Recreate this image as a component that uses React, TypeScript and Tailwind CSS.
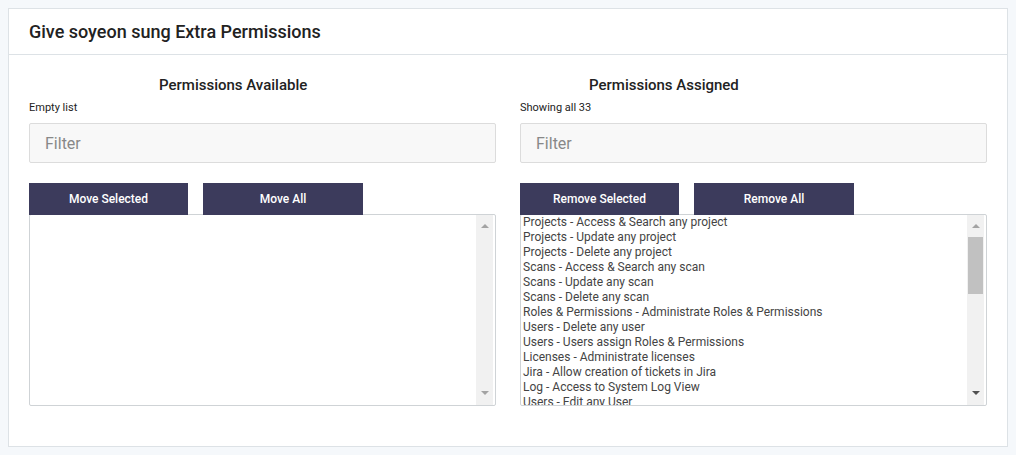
const assigned = [
  'Projects - Access & Search any project',
  'Projects - Update any project',
  'Projects - Delete any project',
  'Scans - Access & Search any scan',
  'Scans - Update any scan',
  'Scans - Delete any scan',
  'Roles & Permissions - Administrate Roles & Permissions',
  'Users - Delete any user',
  'Users - Users assign Roles & Permissions',
  'Licenses - Administrate licenses',
  'Jira - Allow creation of tickets in Jira',
  'Log - Access to System Log View',
  'Users - Edit any User',
  'Users - Create any User',
  'Users - Access & Search any user',
  'Teams - Access & Search any team',
  'Teams - Update any team',
  'Teams - Delete any team',
  'Teams - Create any team',
  'Reports - Access & Search any report',
  'Reports - Delete any report',
  'Reports - Create any report',
  'Settings - Administrate system settings',
  'Settings - Administrate mail settings',
  'Integrations - Administrate integrations',
  'Integrations - Access & Search any integration',
  'Policies - Administrate policies',
  'Policies - Access & Search any policy',
  'Vulnerabilities - Access & Search any vulnerability',
  'Vulnerabilities - Update any vulnerability',
  'Components - Access & Search any component',
  'Licenses - Access & Search any license',
  'Audit - Access to Audit Trail',
]

// classic scrollbar look, drawn since the headless page hides native ones
function FakeScrollbar({ scrollable }: { scrollable: boolean }) {
  return (
    <div className="mr-[2px] flex w-[17px] shrink-0 flex-col bg-[#f1f1f1]">
      <div className="flex h-[22px] items-center justify-center">
        <span className="h-0 w-0 border-x-[4px] border-b-[4px] border-x-transparent border-b-[#a3a3a3]" />
      </div>
      <div className="flex-1 px-px">
        {scrollable && <div className="h-[57px] bg-[#c1c1c1]" />}
      </div>
      <div className="flex h-[24px] items-center justify-center">
        <span
          className={
            scrollable
              ? 'h-0 w-0 border-x-[4px] border-t-[4px] border-x-transparent border-t-[#505050]'
              : 'h-0 w-0 border-x-[4px] border-t-[4px] border-x-transparent border-t-[#a3a3a3]'
          }
        />
      </div>
    </div>
  )
}

function Column({
  title,
  titleClass,
  caption,
  actions,
  items,
}: {
  title: string
  titleClass: string
  caption: string
  actions: [string, string]
  items: string[]
}) {
  return (
    <div className="flex flex-col">
      <h2 className={titleClass}>{title}</h2>
      <p className="mt-[3px] text-[11px] leading-4 text-[#222]">{caption}</p>
      <input
        placeholder="Filter"
        className="mt-[7px] h-10 rounded-[2px] border border-[#dcdcdc] bg-[#f8f8f8] px-[15px] text-[16px] text-[#333] outline-none placeholder:text-[#888]"
      />
      <div className="mt-5 flex gap-[15px]">
        <button className="relative z-10 h-8 w-[159px] bg-[#3c3b5c] text-[12px] font-medium text-white">
          {actions[0]}
        </button>
        <button className="relative z-10 h-8 w-[160px] bg-[#3c3b5c] text-[12px] font-medium text-white">
          {actions[1]}
        </button>
      </div>
      <div className="-mt-px flex h-[192px] rounded-[2px] border border-[#cfd3d6] bg-white">
        <div className="min-w-0 flex-1 overflow-hidden pl-[2px]">
          {items.map((item) => (
            <div key={item} className="h-[15px] text-[12px] leading-[15px] whitespace-nowrap text-[#444]">
              {item}
            </div>
          ))}
        </div>
        <FakeScrollbar scrollable={items.length > 0} />
      </div>
    </div>
  )
}

export default function App() {
  return (
    <div className="min-h-[455px] bg-[#f5f8fb] p-2 font-['Roboto',sans-serif]">
      <section className="border border-[#dde2e6] bg-white">
        <header className="flex h-[46px] items-center border-b border-[#dde2e6] px-5">
          <h1 className="text-[18px] font-medium text-[#222]">Give soyeon sung Extra Permissions</h1>
        </header>
        <div className="grid grid-cols-2 gap-6 px-5 pt-[18px] pb-[40px]">
          <Column
            title="Permissions Available"
            titleClass="ml-[130px] text-[15px] leading-6 font-medium text-[#222]"
            caption="Empty list"
            actions={['Move Selected', 'Move All']}
            items={[]}
          />
          <Column
            title="Permissions Assigned"
            titleClass="ml-[69px] text-[15px] leading-6 font-medium text-[#222]"
            caption="Showing all 33"
            actions={['Remove Selected', 'Remove All']}
            items={assigned}
          />
        </div>
      </section>
    </div>
  )
}
